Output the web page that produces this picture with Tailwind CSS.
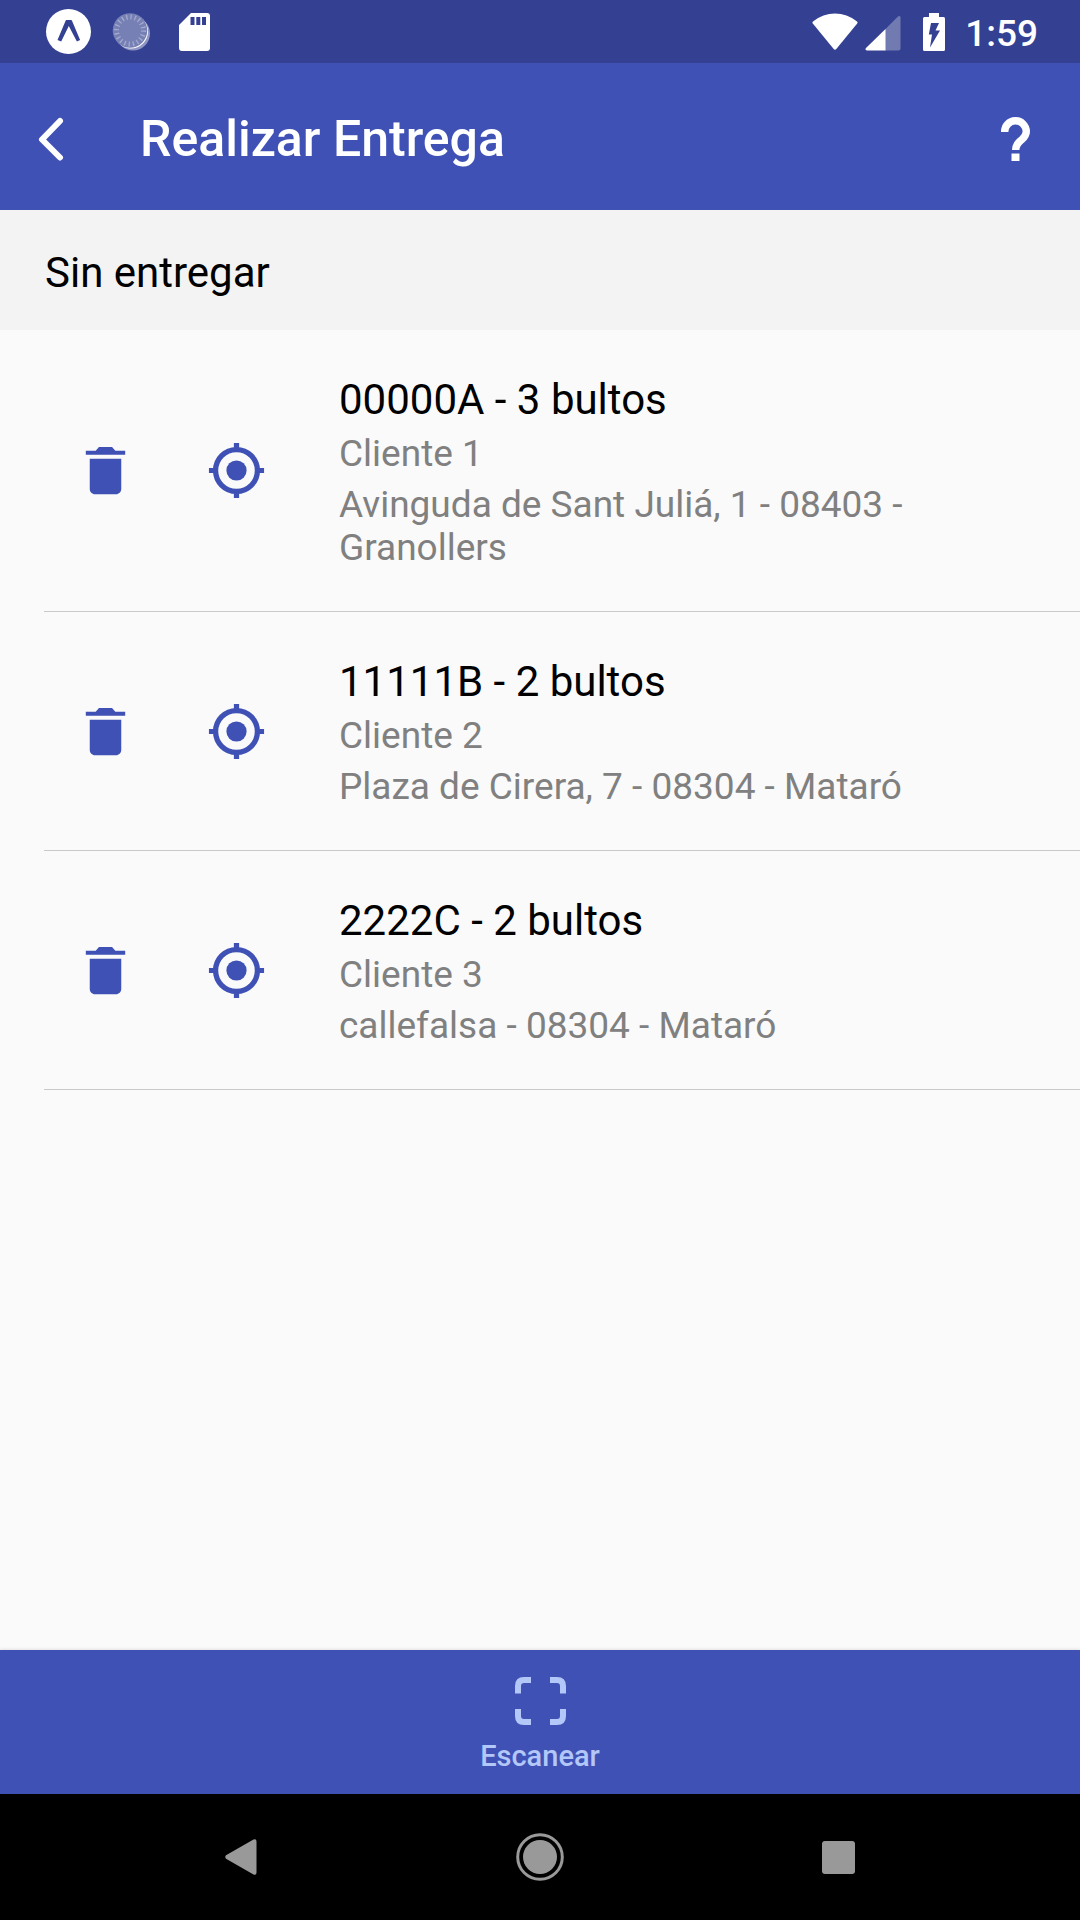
<!DOCTYPE html>
<html lang="es">
<head>
<meta charset="utf-8">
<meta name="viewport" content="width=device-width, initial-scale=1">
<title>Realizar Entrega</title>
<script src="https://cdn.jsdelivr.net/npm/@tailwindcss/browser@4"></script>
</head>
<body class="flex min-h-screen flex-col bg-[#fafafa] font-[Roboto,sans-serif] text-black">

<svg class="hidden" aria-hidden="true">
  <symbol id="trash" viewBox="0 0 512 512"><path d="M128 405.4c0 23.4 19.2 42.6 42.7 42.6h170.6c23.500 0 42.700-19.200 42.700-42.600V160H128zM416 96h-80l-26.800-32H202.800L176 96H96v32h320z"/></symbol>
  <symbol id="locate" viewBox="0 0 512 512"><circle cx="256" cy="256" r="82"/><circle cx="256" cy="256" r="170" fill="none" stroke="currentColor" stroke-width="43"/><path d="M234.700 32h42.600v45h-42.600zM234.700 435h42.600v45h-42.600zM32 234.700h45v42.600H32zM435 234.700h45v42.600h-45z"/></symbol>
</svg>

<div class="flex h-[63px] items-center justify-between bg-[#344193] pr-[42px] pl-[46px] text-white">
  <div class="flex items-center">
    <svg class="size-[45px]" viewBox="0 0 45 45"><circle cx="22.500" cy="22.500" r="22.500" fill="white"/><path d="M11.500 31l8-19c.3-.8.6-1 1.300-1h4c.7 0 1 .2 1.300 1l8 19-3.200 1.500L22.800 17l-7.600 15.500z" fill="#344193"/></svg>
    <svg class="ml-[20px] size-[40px]" viewBox="0 0 40 40"><circle cx="22" cy="21.500" r="17" fill="white" opacity=".45"/><circle cx="20" cy="19.500" r="17" fill="white"/><circle cx="19" cy="18.500" r="17.300" fill="#7680b4"/><circle cx="19" cy="18.500" r="13.500" fill="none" stroke="#a3aacd" stroke-width="5" stroke-dasharray="1.300 2.941"/></svg>
    <svg class="ml-[28px] h-[38px] w-[31px]" viewBox="0 0 31 38"><path fill="white" fill-rule="evenodd" d="M12 0h16a3 3 0 0 1 3 3v32a3 3 0 0 1-3 3H3a3 3 0 0 1-3-3V12zM11.500 4v8h4V4zM17.300 4v8h4V4zM23 4v8h4V4z"/></svg>
  </div>
  <div class="flex items-center">
    <svg class="h-[38px] w-[46px]" viewBox="0 0 46 38"><path fill="white" d="M1 8.500C14-2.300 32-2.300 45 8.500q1 1 .2 2L24.300 36q-1.300 1.300-2.600 0L.800 10.500Q0 9.500 1 8.500z"/></svg>
    <svg class="ml-[7px] h-[38px] w-[36px]" viewBox="0 0 36 38"><path fill="#717bb1" d="M20 16.500L32.500 4Q35 2 35.500 4.500v31q0 2-2 2H20z"/><path fill="white" d="M20.500 16v21.500H2q-2.500-.5-1-2.500z"/></svg>
    <svg class="ml-[22px] h-[38px] w-[22px]" viewBox="0 0 22 38"><path fill="white" fill-rule="evenodd" d="M6 0h10v4h4.500q1.500 0 1.500 1.500v31q0 1.500-1.500 1.500h-19Q0 38 0 36.500v-31Q0 4 1.500 4H6zM8 10L5.800 21.500H9L7 34.500l10-17h-4.500l3.500-7.500z"/></svg>
    <time class="ml-[20px] pt-[3px] text-[37px] leading-[43px] font-medium">1:59</time>
  </div>
</div>

<header class="flex h-[147px] items-center bg-[#3f51b5] pt-[4px] pr-[42px] pl-[31px] text-white">
  <button type="button" aria-label="Volver" class="flex h-[63px] w-[106px] items-center">
    <svg class="h-[44px] w-[40px]" viewBox="0 0 40 44"><path d="M29 4L11 22.500L29 40.500" fill="none" stroke="white" stroke-width="6" stroke-linecap="round" stroke-linejoin="round"/></svg>
  </button>
  <h1 class="flex-1 pl-[3px] text-[50px] leading-[58px] font-medium">Realizar Entrega</h1>
  <button type="button" aria-label="Ayuda" class="flex h-[63px] w-[45px] items-center justify-center">
    <svg class="h-[44px] w-[29px]" viewBox="0 0 29 44"><path d="M3.700 15a10.800 11 0 0 1 21.600-.5c0 4-2 6-4.600 8.200c-3.200 2.800-6 4.800-6 10.300" fill="none" stroke="white" stroke-width="7.400"/><path d="M10.500 36.500h8V44h-8z" fill="white"/></svg>
  </button>
</header>

<main class="flex-1">
  <h2 class="flex h-[120px] items-center bg-[#f3f3f3] px-[45px] pt-[4px] text-[42px] leading-[49px]">Sin entregar</h2>
  <ul class="pl-[44px]">
    <li class="flex items-center border-b border-[#c9c9c9] pr-[45px] pl-[30px]">
      <div class="flex w-[265px] shrink-0 gap-[68px] text-[#3f51b5]">
        <button type="button" aria-label="Eliminar 00000A"><svg class="size-[63px] fill-current"><use href="#trash"/></svg></button>
        <button type="button" aria-label="Localizar 00000A"><svg class="size-[63px] fill-current"><use href="#locate"/></svg></button>
      </div>
      <div class="flex min-w-0 flex-1 flex-col gap-[8px] pt-[45px] pb-[42px] text-[37px] leading-[43px] text-[#808080]">
        <h3 class="text-[42px] leading-[49px] text-black">00000A - 3 bultos</h3>
        <p>Cliente 1</p>
        <p>Avinguda de Sant Juliá, 1 - 08403 - Granollers</p>
      </div>
    </li>
    <li class="flex items-center border-b border-[#c9c9c9] pr-[45px] pl-[30px]">
      <div class="flex w-[265px] shrink-0 gap-[68px] text-[#3f51b5]">
        <button type="button" aria-label="Eliminar 11111B"><svg class="size-[63px] fill-current"><use href="#trash"/></svg></button>
        <button type="button" aria-label="Localizar 11111B"><svg class="size-[63px] fill-current"><use href="#locate"/></svg></button>
      </div>
      <div class="flex min-w-0 flex-1 flex-col gap-[8px] pt-[45px] pb-[42px] text-[37px] leading-[43px] text-[#808080]">
        <h3 class="text-[42px] leading-[49px] text-black">11111B - 2 bultos</h3>
        <p>Cliente 2</p>
        <p>Plaza de Cirera, 7 - 08304 - Mataró</p>
      </div>
    </li>
    <li class="flex items-center border-b border-[#c9c9c9] pr-[45px] pl-[30px]">
      <div class="flex w-[265px] shrink-0 gap-[68px] text-[#3f51b5]">
        <button type="button" aria-label="Eliminar 2222C"><svg class="size-[63px] fill-current"><use href="#trash"/></svg></button>
        <button type="button" aria-label="Localizar 2222C"><svg class="size-[63px] fill-current"><use href="#locate"/></svg></button>
      </div>
      <div class="flex min-w-0 flex-1 flex-col gap-[8px] pt-[45px] pb-[42px] text-[37px] leading-[43px] text-[#808080]">
        <h3 class="text-[42px] leading-[49px] text-black">2222C - 2 bultos</h3>
        <p>Cliente 3</p>
        <p>callefalsa - 08304 - Mataró</p>
      </div>
    </li>
  </ul>
</main>

<footer>
  <button type="button" class="flex h-[144px] w-full flex-col items-center bg-[#3f51b5] pt-[27px] text-[29px] leading-[34px] font-medium text-[#b3c7f9] shadow-[0_-1px_3px_rgba(0,0,0,0.1)]">
    <svg class="mb-[14px] h-[48px] w-[51px]" viewBox="0 0 51 48" fill="none" stroke="currentColor" stroke-width="6"><path d="M3 16.500V9q0-6 6-6h7M35 3h7q6 0 6 6v7.500M48 32v7q0 6-6 6h-7M16 45H9q-6 0-6-6v-7"/></svg>
    Escanear
  </button>
  <nav aria-label="Sistema" class="grid h-[126px] grid-cols-3 bg-black px-[92px] text-[#999999]">
    <button type="button" aria-label="Atrás" class="flex items-center justify-center"><svg class="h-[36px] w-[32px] fill-current" viewBox="0 0 32 36"><path d="M1 16.300L28.500.500Q31.500-.500 31.500 2.500v31q0 3-3 2L1 19.700q-1.500-1.700 0-3.400z"/></svg></button>
    <button type="button" aria-label="Inicio" class="flex items-center justify-center"><svg class="size-[48px] fill-current" viewBox="0 0 48 48"><circle cx="24" cy="24" r="17"/><circle cx="24" cy="24" r="22.300" fill="none" stroke="currentColor" stroke-width="3"/></svg></button>
    <button type="button" aria-label="Recientes" class="flex items-center justify-center"><span class="size-[33px] rounded-[3px] bg-[#999999]"></span></button>
  </nav>
</footer>
</body>
</html>
